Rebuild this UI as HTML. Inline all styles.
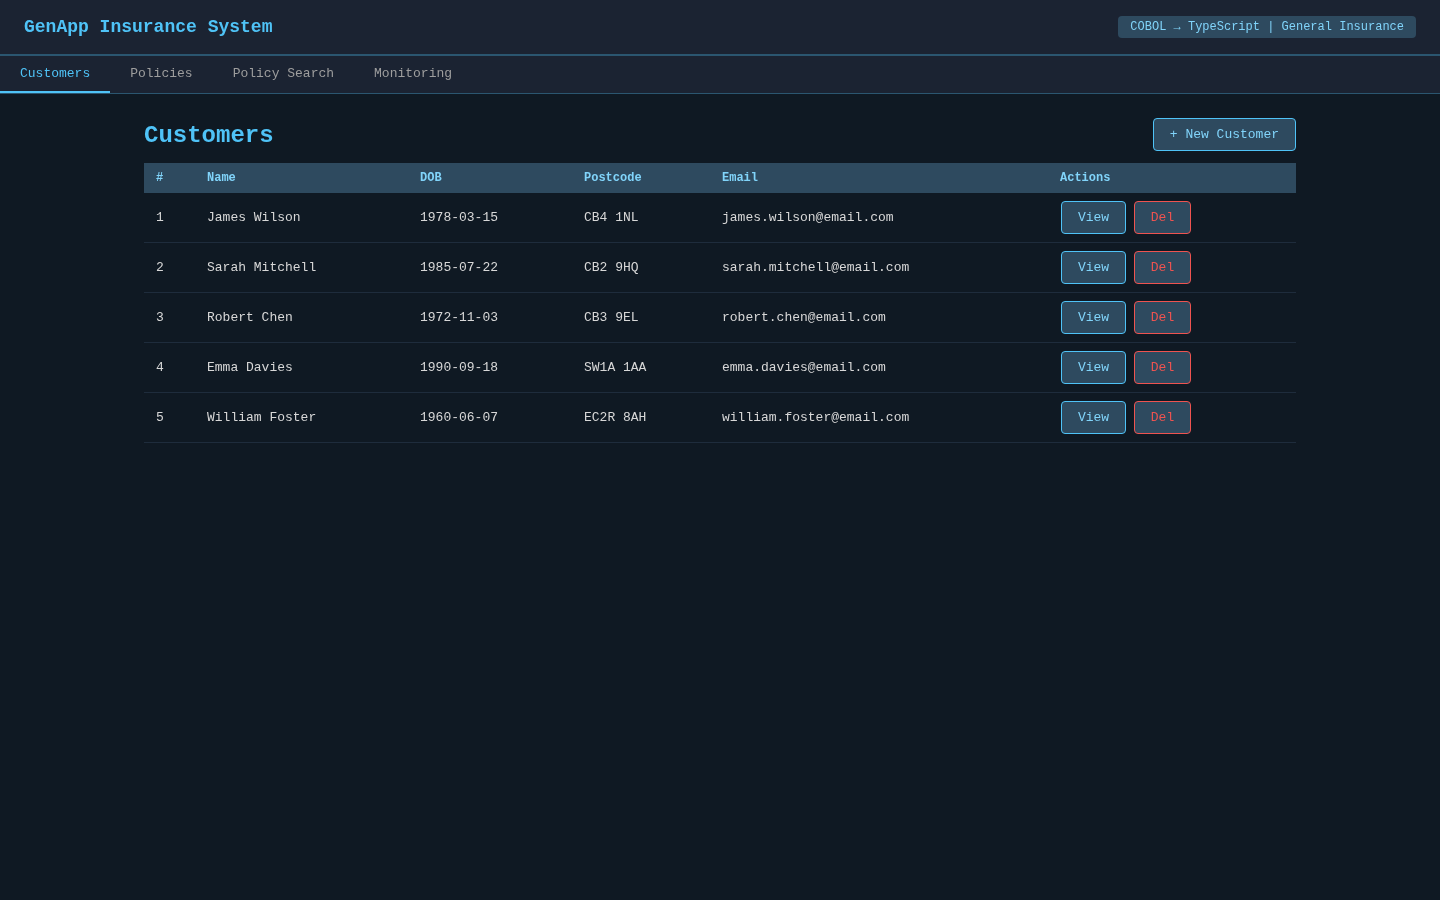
<!DOCTYPE html>
<html>
<head>
<meta charset="utf-8">
<style>
*{box-sizing:border-box;margin:0;padding:0}
html,body{width:1440px;height:900px;overflow:hidden}
body{will-change:transform}
body{background:#0f1923;font-family:"Liberation Mono",monospace;color:#e0e0e0}
header{height:56px;background:#1b2332;border-bottom:2px solid #2b5670;display:flex;align-items:center;justify-content:space-between;padding:0 24px}
header h1{font-size:18px;font-weight:bold;color:#4fc3f7;line-height:20px}
.badge{font-size:12px;color:#81d4fa;background:#2e4a5f;border-radius:4px;padding:4px 12px;line-height:14px;height:22px}
nav{height:38px;background:#1b2332;border-bottom:1px solid #2b5670;display:flex}
nav a{display:block;padding:0 20px;font-size:13px;line-height:35px;height:37px;color:#9e9e9e;text-decoration:none;border-bottom:2px solid transparent}
nav a.active{color:#4fc3f7;border-bottom-color:#4fc3f7}
main{width:1200px;margin:0 auto;padding:24px}
.top{display:flex;justify-content:space-between;align-items:center;height:33px;margin-bottom:12px}
h2{font-size:24px;font-weight:bold;color:#4fc3f7;position:relative;top:1px}
.btn{font-family:"Liberation Mono",monospace;font-size:13px;background:#2e4a5f;color:#81d4fa;border:1px solid #4fc3f7;border-radius:4px;padding:0 16px;height:33px;line-height:31px}
table{width:100%;border-collapse:separate;border-spacing:0}
th{background:#2e4a5f;color:#81d4fa;font-size:12px;font-weight:bold;text-align:left;height:30px;padding:0 12px}
td{font-size:13px;color:#d8d8d8;height:50px;box-sizing:border-box;padding:0 12px;border-bottom:1px solid #1e2c3c}
.sm{font-family:"Liberation Mono",monospace;font-size:13px;background:#2e4a5f;border-radius:4px;height:33px;line-height:31px;padding:0;text-align:center;display:inline-block;vertical-align:middle}
.v{color:#81d4fa;border:1px solid #4fc3f7;margin-left:1px}
.d{color:#ef5350;border:1px solid #ef5350;margin-left:8px}
</style>
</head>
<body>
<header>
<h1>GenApp Insurance System</h1>
<div class="badge">COBOL → TypeScript | General Insurance</div>
</header>
<nav>
<a class="active">Customers</a>
<a>Policies</a>
<a>Policy Search</a>
<a>Monitoring</a>
</nav>
<main>
<div class="top">
<h2>Customers</h2>
<div class="btn">+ New Customer</div>
</div>
<table>
<colgroup><col style="width:51px"><col style="width:213px"><col style="width:164px"><col style="width:138px"><col style="width:338px"><col></colgroup>
<tr><th>#</th><th>Name</th><th>DOB</th><th>Postcode</th><th>Email</th><th>Actions</th></tr>
<tr><td>1</td><td>James Wilson</td><td>1978-03-15</td><td>CB4 1NL</td><td>james.wilson@email.com</td><td><span class="sm v" style="width:65px">View</span><span class="sm d" style="width:57px">Del</span></td></tr>
<tr><td>2</td><td>Sarah Mitchell</td><td>1985-07-22</td><td>CB2 9HQ</td><td>sarah.mitchell@email.com</td><td><span class="sm v" style="width:65px">View</span><span class="sm d" style="width:57px">Del</span></td></tr>
<tr><td>3</td><td>Robert Chen</td><td>1972-11-03</td><td>CB3 9EL</td><td>robert.chen@email.com</td><td><span class="sm v" style="width:65px">View</span><span class="sm d" style="width:57px">Del</span></td></tr>
<tr><td>4</td><td>Emma Davies</td><td>1990-09-18</td><td>SW1A 1AA</td><td>emma.davies@email.com</td><td><span class="sm v" style="width:65px">View</span><span class="sm d" style="width:57px">Del</span></td></tr>
<tr><td>5</td><td>William Foster</td><td>1960-06-07</td><td>EC2R 8AH</td><td>william.foster@email.com</td><td><span class="sm v" style="width:65px">View</span><span class="sm d" style="width:57px">Del</span></td></tr>
</table>
</main>
</body>
</html>
